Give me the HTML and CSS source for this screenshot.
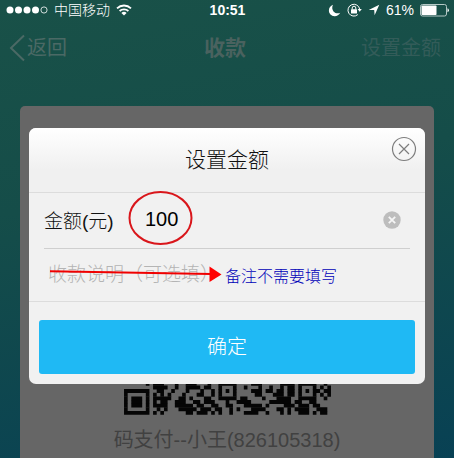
FILE: index.html
```html
<!DOCTYPE html>
<html lang="zh-CN">
<head>
<meta charset="utf-8">
<meta name="viewport" content="width=device-width, initial-scale=1">
<title>收款</title>
<link rel="stylesheet" href="styles.css">
</head>
<body>
<div class="screen">
  <div class="status">
    <div class="status-side">
      <svg class="dots" width="42" height="10" viewBox="0 0 42 10" aria-hidden="true">
        <g fill="#fff"><circle cx="4" cy="5" r="3.5"/><circle cx="12.5" cy="5" r="3.5"/><circle cx="21" cy="5" r="3.5"/><circle cx="29.500" cy="5" r="3.5"/></g>
        <circle cx="38" cy="5" r="3.100" fill="none" stroke="#fff" stroke-width=".8"/>
      </svg>
      <span class="carrier">中国移动</span>
      <svg width="16" height="12" viewBox="0 0 16 12" aria-hidden="true">
        <g fill="none" stroke="#fff" stroke-width="1.800"><path d="M1 4.300a10.200 10.200 0 0 1 14 0"/><path d="M3.600 7a6.500 6.500 0 0 1 8.800 0"/></g>
        <path d="M8 11.600 5.400 8.900a3.800 3.800 0 0 1 5.200 0z" fill="#fff"/>
      </svg>
    </div>
    <time class="clock">10:51</time>
    <div class="status-side status-right">
      <svg width="13" height="13" viewBox="0 0 13 13" aria-hidden="true"><path d="M5 .8C3.800 3 4 5.500 5.500 7.400 7.200 9.300 9.800 9.800 12.200 8.800 11 11.300 8.800 12.300 6.500 12.200 3.200 12 .9 9.500.9 6.500.9 3.900 2.500 1.700 5 .8z" fill="#fff"/></svg>
      <svg class="lock" width="15" height="14" viewBox="0 0 15 14" aria-hidden="true">
        <path d="M10.800 11.600A5.900 5.900 0 1 1 12.700 6.200" fill="none" stroke="#fff"/>
        <path d="M10.600 6h4.200l-2.100 2.800z" fill="#fff"/>
        <rect x="4" y="6.200" width="6" height="4.200" rx=".5" fill="#fff"/>
        <path d="M5.200 6.500V5a1.800 1.800 0 0 1 3.600 0v1.500" fill="none" stroke="#fff"/>
      </svg>
      <svg width="12" height="12" viewBox="0 0 12 12" aria-hidden="true"><path d="M11.300.8 6.600 11.300 6.200 6H.7z" fill="#fff"/></svg>
      <span class="percent">61%</span>
      <svg width="29" height="13" viewBox="0 0 29 13" aria-hidden="true">
        <rect x=".5" y=".5" width="26" height="11.500" rx="2" fill="none" stroke="#b5c9c7"/>
        <rect x="1.500" y="1.500" width="15" height="9.500" rx=".8" fill="#fff"/>
        <path d="M27.500 4.300q1.400.5 1.400 2t-1.400 2z" fill="#fff"/>
      </svg>
    </div>
  </div>

  <header class="nav">
    <a class="back" href="#">
      <svg width="17" height="28" viewBox="0 0 17 28" aria-hidden="true"><path d="M15 1.500 2 14l13 12.500" fill="none" stroke="currentColor" stroke-width="2"/></svg>
      返回
    </a>
    <h1 class="nav-title">收款</h1>
    <a class="set-amount" href="#">设置金额</a>
  </header>

  <main class="card">
    <svg class="qr" viewBox="0 0 57 9" role="img" aria-label="二维码">
      <g stroke="#050505" stroke-width="1.080" fill="none">
        <path d="M6 .5h1m1 0h3m3 0h1m2 0h3m3 0h1m2 0h5m4 0h3m5 0h4m1 0h5m2 0h1"/>
        <path d="M8 1.500h4m2 0h1m2 0h4m1 0h2m2 0h1m3 0h1m2 0h1m3 0h1m2 0h1m2 0h1m1 0h2m1 0h1m3 0h1m1 0h1m1 0h1"/>
        <path d="M0 2.500h7m2 0h2m2 0h1m3 0h1m3 0h1m2 0h1m1 0h1m1 0h1m1 0h1m4 0h3m1 0h2m1 0h2m1 0h2m1 0h1m1 0h1m1 0h2m1 0h2"/>
        <path d="M0 3.500h1m5 0h1m1 0h1m1 0h1m1 0h1m3 0h1m3 0h2m2 0h1m1 0h1m3 0h1m5 0h2m3 0h3m1 0h2m1 0h1m3 0h1m1 0h1m1 0h1"/>
        <path d="M0 4.500h1m1 0h3m1 0h1m1 0h5m2 0h2m1 0h1m3 0h2m2 0h5m1 0h2m4 0h1m3 0h4m2 0h5m2 0h1"/>
        <path d="M0 5.500h1m1 0h3m1 0h1m1 0h1m1 0h2m2 0h3m2 0h2m1 0h3m3 0h1m2 0h4m5 0h6m1 0h2m2 0h2"/>
        <path d="M0 6.500h1m1 0h3m1 0h1m1 0h4m2 0h5m1 0h2m2 0h2m2 0h2m3 0h5m1 0h1m4 0h3m1 0h3m1 0h2"/>
        <path d="M0 7.500h1m5 0h1m2 0h1m1 0h1m3 0h5m1 0h3m1 0h2m2 0h1m1 0h1m3 0h4m3 0h2m1 0h1m1 0h4m2 0h3"/>
        <path d="M0 8.500h7m1 0h1m1 0h1m6 0h2m1 0h3m1 0h1m1 0h1m2 0h1m3 0h4m2 0h1m3 0h1m1 0h1m2 0h3m1 0h1m1 0h2"/>
      </g>
    </svg>
    <p class="payee">码支付--小王(826105318)</p>
  </main>

  <form class="dialog" role="dialog" aria-labelledby="dialog-title">
    <div class="dialog-head">
      <h2 class="dialog-title" id="dialog-title">设置金额</h2>
      <button class="close" type="button" aria-label="关闭">
        <svg width="26" height="26" viewBox="0 0 26 26" aria-hidden="true"><g fill="none" stroke="#7d7d7d" stroke-width="1.200"><circle cx="13" cy="13" r="11.500"/><path d="m8 8 10 10M18 8 8 18"/></g></svg>
      </button>
    </div>
    <div class="fields">
      <div class="field amount">
        <label for="amount">金额(元)</label>
        <input id="amount" type="text" inputmode="decimal" value="100">
        <button class="clear" type="button" aria-label="清除">
          <svg width="18" height="18" viewBox="0 0 18 18" aria-hidden="true"><circle cx="9" cy="9" r="8.700" fill="#bdbdbd"/><path d="m5.800 5.800 6.400 6.400M12.200 5.800 5.800 12.200" stroke="#f5f5f5" stroke-width="1.800"/></svg>
        </button>
      </div>
      <div class="field note">
        <input id="note" type="text" aria-label="收款说明" placeholder="收款说明（可选填）">
      </div>
    </div>
    <div class="actions"><button class="confirm" type="submit">确定</button></div>
    <svg class="marks" width="200" height="100" viewBox="0 0 200 100" aria-hidden="true">
      <ellipse cx="131.500" cy="30" rx="31" ry="26" fill="none" stroke="#d9161b" stroke-width="2"/>
      <path d="M21 83.300 182 86" stroke="#f00000" stroke-width="2"/>
      <path d="M180.500 78.500v15.500L192.500 86.500z" fill="#f00"/>
    </svg>
    <span class="remark">备注不需要填写</span>
  </form>
</div>
</body>
</html>
```
FILE: styles.css
```css
* { box-sizing: border-box; }

body {
  margin: 0;
  font-family: "Liberation Sans", "Noto Sans CJK SC", sans-serif;
  font-weight: 300;
}

h1, h2, p { margin: 0; font-weight: inherit; }

a { color: inherit; text-decoration: none; }

button, input {
  margin: 0;
  padding: 0;
  border: 0;
  background: none;
  font: inherit;
  color: inherit;
}

svg { display: block; flex: none; }

.screen {
  position: relative;
  display: flex;
  flex-direction: column;
  min-height: 100vh;
  overflow: hidden;
  background: linear-gradient(170deg, #195148 0%, #154d49 40%, #084154 100%);
}

.status {
  display: grid;
  grid-template-columns: 1fr auto 1fr;
  align-items: center;
  height: 20px;
  padding: 0 5px 0 6px;
  color: #fff;
  font-size: 14px;
  line-height: 20px;
}

.status-side { display: flex; align-items: center; gap: 6px; }
.status-right { justify-content: flex-end; }
.clock { font-weight: 700; }

.nav {
  display: grid;
  grid-template-columns: 1fr auto 1fr;
  align-items: center;
  height: 56px;
  padding: 0 13px 0 9px;
  color: #4b6965;
  font-size: 20px;
  font-weight: 400;
  line-height: 28px;
}

.back { display: flex; align-items: center; gap: 1px; }
.nav-title { font-size: 21px; font-weight: 700; color: #4a625f; }
.set-amount { justify-self: end; color: #335c59; }

.card {
  flex: 1;
  display: flex;
  flex-direction: column;
  align-items: center;
  margin: 30px 20px 0;
  padding-top: 276px;
  border-radius: 5px 5px 0 0;
  background: #666;
}

.qr { width: 50%; }

.payee {
  margin-top: 10px;
  color: #414141;
  font-size: 20px;
  font-weight: 400;
  line-height: 30px;
}

.dialog {
  position: absolute;
  top: 128px;
  left: 29px;
  right: 29px;
  border-radius: 7px;
  background: #f1f1f1;
  color: #111;
  font-size: 19px;
}

.dialog-head {
  height: 65px;
  border-bottom: 1px solid #dcdcdc;
  border-radius: 7px 7px 0 0;
  background: linear-gradient(#fff, #f0f0f0 65%);
}

.dialog-title {
  font-size: 21px;
  line-height: 64px;
  text-align: center;
}

.close { position: absolute; top: 8px; right: 8px; }

.fields { padding: 0 15px; border-bottom: 1px solid #dcdcdc; }

.field { display: flex; align-items: center; height: 54px; }

.amount {
  height: 56px;
  padding: 0 9px 2px 0;
  border-bottom: 1px solid #cfcfcf;
}

.amount label { flex: none; width: 101px; }
.amount input { flex: 1; min-width: 0; font-size: 20px; color: #000; }

.note { height: 52px; padding-left: 4px; }
.note input { width: 100%; }
.note input::placeholder { color: #b4b4b4; opacity: 1; }

.actions { padding: 18px 10px 10px; }

.confirm {
  display: block;
  width: 100%;
  height: 54px;
  padding-bottom: 4px;
  border-radius: 3px;
  background: #1fb9f4;
  color: #fff;
  font-size: 20px;
}

.marks { position: absolute; top: 60px; left: 0; }

.remark {
  position: absolute;
  top: 137px;
  left: 196px;
  color: #0000b8;
  font-size: 16px;
  line-height: 24px;
}
```
